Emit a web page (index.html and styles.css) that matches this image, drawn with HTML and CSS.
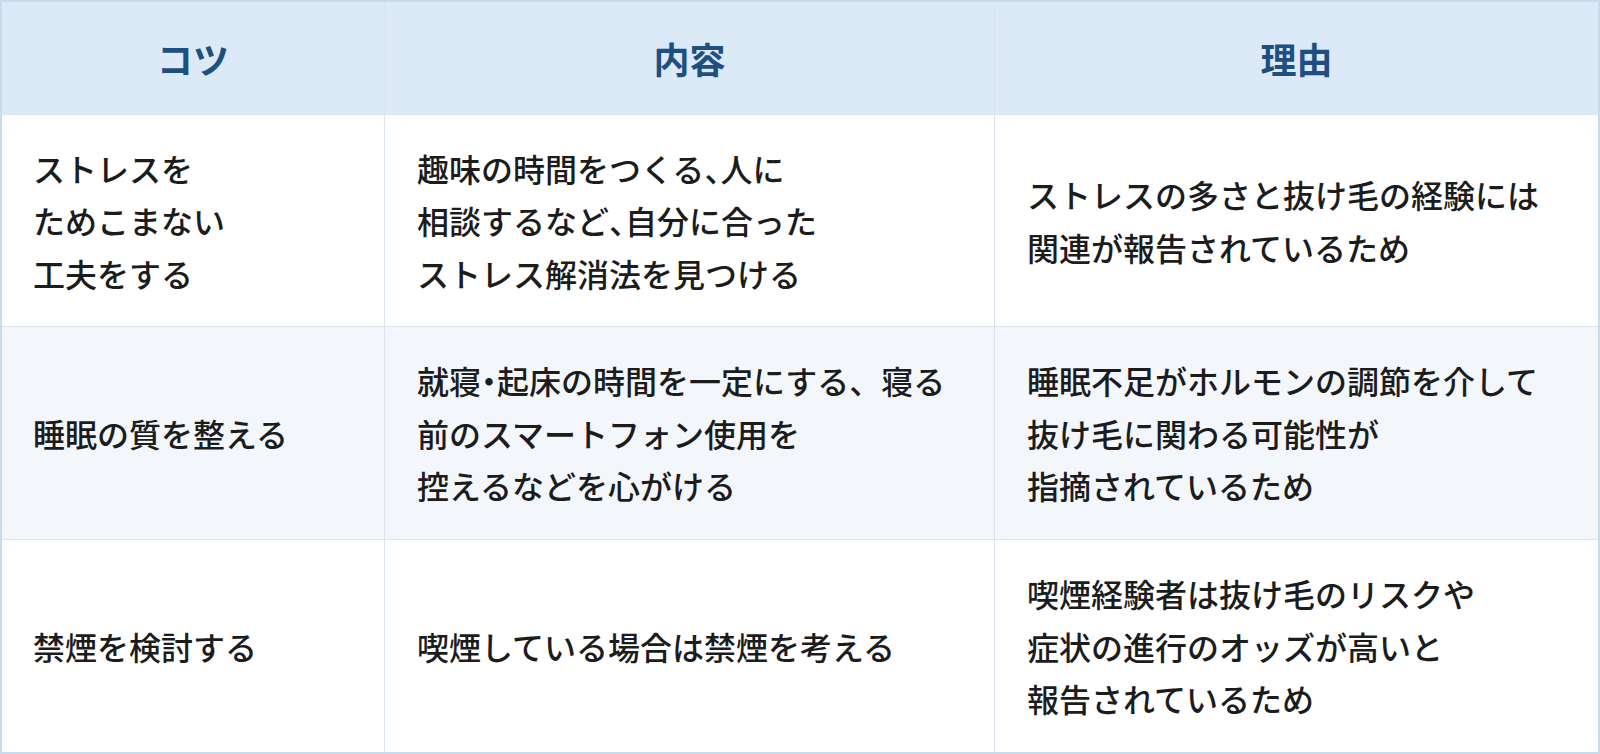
FILE: index.html
```html
<!DOCTYPE html>
<html lang="ja">
<head>
<meta charset="utf-8">
<title>コツ</title>
<link rel="stylesheet" href="styles.css">
</head>
<body>
<div class="table">
  <div class="cell head first">コツ</div>
  <div class="cell head">内容</div>
  <div class="cell head">理由</div>

  <div class="cell first"><p>ストレスを<br>ためこまない<br>工夫をする</p></div>
  <div class="cell"><p>趣味の時間をつくる<span class="half">、</span>人に<br>相談するなど<span class="half">、</span>自分に合った<br>ストレス解消法を見つける</p></div>
  <div class="cell"><p>ストレスの多さと抜け毛の経験には<br>関連が報告されているため</p></div>

  <div class="cell first alt"><p>睡眠の質を整える</p></div>
  <div class="cell alt"><p>就寝<span class="half">・</span>起床の時間を一定にする、寝る<br>前のスマートフォン使用を<br>控えるなどを心がける</p></div>
  <div class="cell alt"><p>睡眠不足がホルモンの調節を介して<br>抜け毛に関わる可能性が<br>指摘されているため</p></div>

  <div class="cell first"><p>禁煙を検討する</p></div>
  <div class="cell"><p>喫煙している場合は禁煙を考える</p></div>
  <div class="cell"><p>喫煙経験者は抜け毛のリスクや<br>症状の進行のオッズが高いと<br>報告されているため</p></div>
</div>
</body>
</html>
```
FILE: styles.css
```css
html, body {
  margin: 0;
  padding: 0;
  background: #ffffff;
}

body {
  font-family: "Noto Sans CJK JP", "Noto Sans", sans-serif;
  color: #1c1c1c;
}

.table {
  display: grid;
  grid-template-columns: 382px 610px 604px;
  grid-template-rows: 112px 212px 213px 213px;
  width: 1596px;
  border: 2px solid #c8dbee;
}

.cell {
  display: flex;
  align-items: center;
  padding: 0 32px;
  font-size: 32px;
  font-weight: 500;
  line-height: 52.5px;
  border-left: 1px solid #d9e4ef;
  border-top: 1px solid #d9e4ef;
  background: #ffffff;
}

.cell p {
  margin: 0;
}

.cell.first {
  border-left: none;
  padding-left: 31px;
}

.cell.head {
  border-top: none;
  justify-content: center;
  background: #dce9f6;
  color: #1d4f80;
  font-size: 36px;
  font-weight: 700;
  padding: 0;
}

.cell.alt {
  background: #f3f7fc;
}

.half {
  font-feature-settings: "halt";
}
```
